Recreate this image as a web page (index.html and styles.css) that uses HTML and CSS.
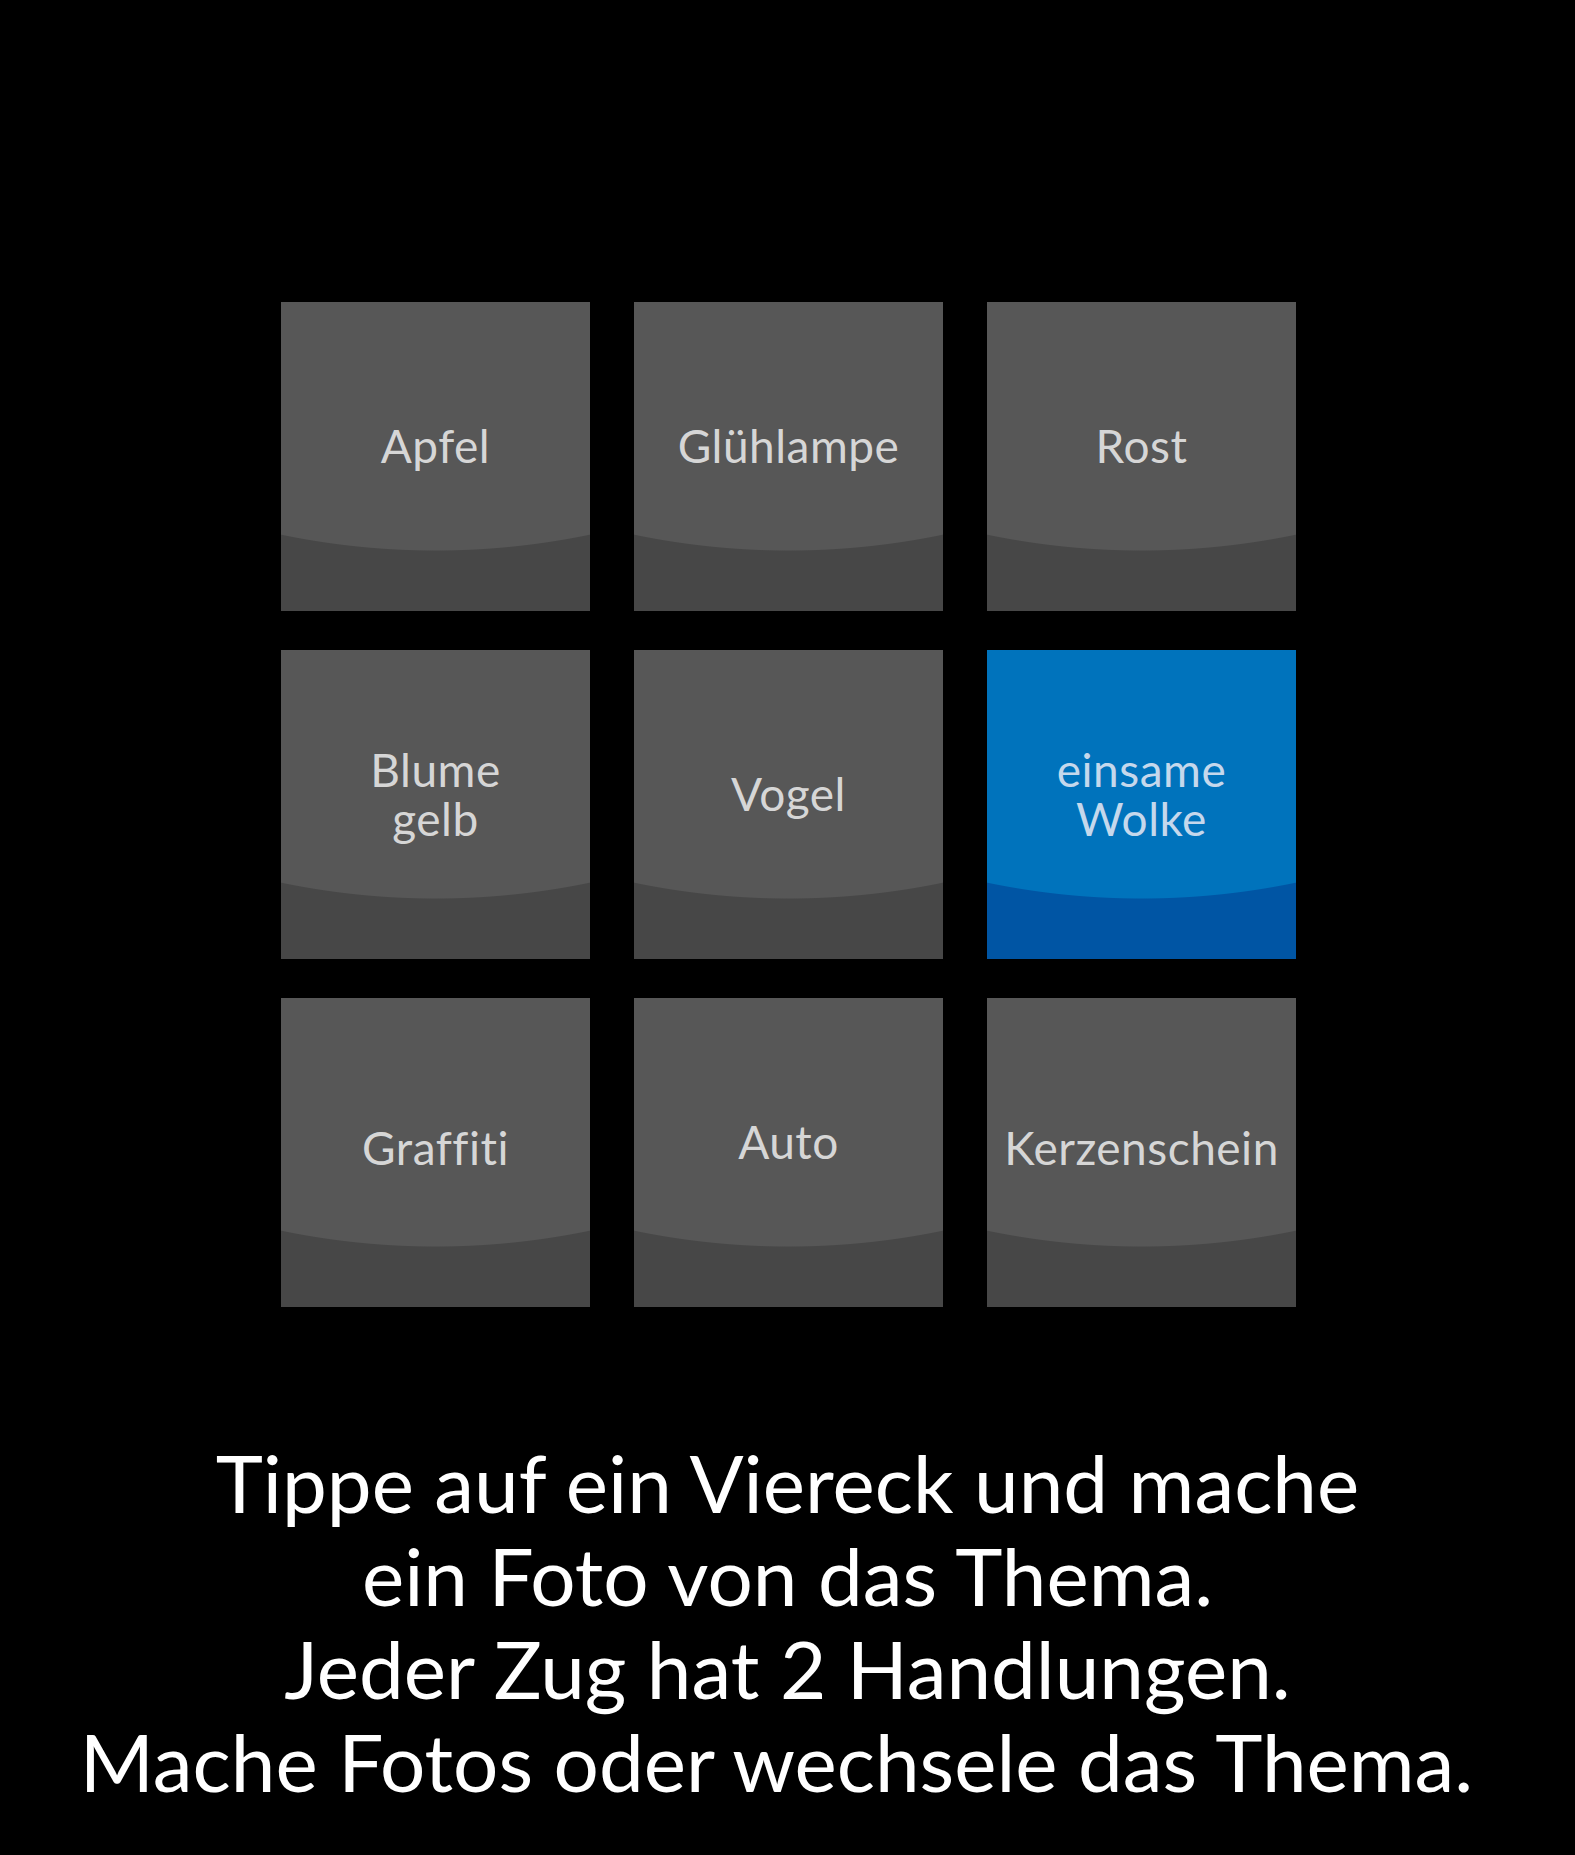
FILE: index.html
```html
<!DOCTYPE html>
<html lang="de">
<head>
  <meta charset="UTF-8" />
  <meta name="viewport" content="width=device-width, initial-scale=1.0"/>
  <title>Foto Bingo</title>
  <link rel="stylesheet" href="styles.css">
</head>
<body>

  <div class="board">
    <button class="tile"><span>Apfel</span></button>
    <button class="tile"><span>Glühlampe</span></button>
    <button class="tile"><span>Rost</span></button>
    <button class="tile"><span>Blume<br>gelb</span></button>
    <button class="tile"><span>Vogel</span></button>
    <button class="tile selected"><span>einsame<br>Wolke</span></button>
    <button class="tile low"><span>Graffiti</span></button>
    <button class="tile"><span>Auto</span></button>
    <button class="tile low"><span>Kerzenschein</span></button>
  </div>

  <p class="instructions">
    Tippe auf ein Viereck und mache<br>
    ein Foto von das Thema.<br>
    Jeder Zug hat 2 Handlungen.<br>
    <span class="last-line">Mache Fotos oder wechsele das Thema.</span>
  </p>

</body>
</html>
```

FILE: styles.css
```css
body {
  margin: 0;
  background-color: #000;
  font-family: Lato, "Open Sans", sans-serif;
  color: #fff;
}

.board {
  display: grid;
  grid-template-columns: 309px 309px 309px;
  grid-auto-rows: 309px;
  column-gap: 44px;
  row-gap: 39px;
  justify-content: center;
  padding-top: 302px;
  padding-left: 2px;
}

.tile {
  border: none;
  padding: 0 0 22px 0;
  margin: 0;
  font-family: inherit;
  font-size: 46px;
  font-weight: 400;
  line-height: 49px;
  letter-spacing: 0.5px;
  color: #d6d6d6;
  cursor: pointer;
  display: flex;
  align-items: center;
  justify-content: center;
  text-align: center;
  background: radial-gradient(ellipse 760px 760px at 50% -511px, #575757 759px, #474747 760px);
}

.tile.low {
  padding-bottom: 10px;
}

.tile.selected {
  color: #c5d8ec;
  background: radial-gradient(ellipse 760px 760px at 50% -511px, #0073bc 759px, #0055a4 760px);
}

.instructions {
  margin: 129px 0 0 0;
  text-align: center;
  font-size: 80px;
  line-height: 93px;
  font-weight: 400;
}

.last-line {
  margin-right: 22px;
}
```
